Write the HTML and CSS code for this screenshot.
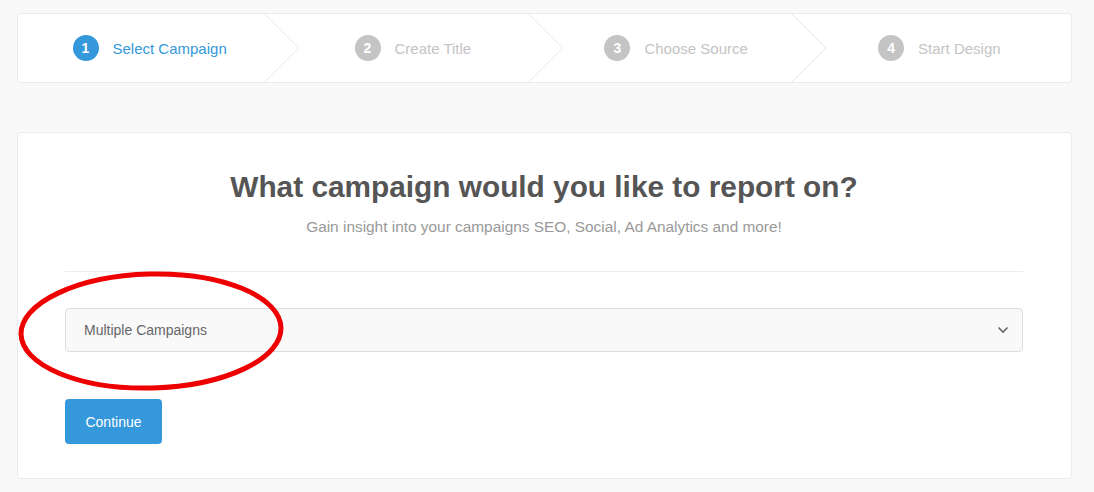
FILE: index.html
```html
<!DOCTYPE html>
<html>
<head>
<meta charset="utf-8">
<link rel="stylesheet" href="styles.css">
</head>
<body>
<div class="page">
  <div class="steps">
    <div class="step active">
      <span class="num">1</span><span class="label">Select Campaign</span>
      <svg class="chev" width="36" height="70" viewBox="0 0 36 70"><polyline points="0,0 35,35 0,70" fill="none" stroke="#e6e6e6" stroke-width="1"/></svg>
    </div>
    <div class="step">
      <span class="num">2</span><span class="label">Create Title</span>
      <svg class="chev" width="36" height="70" viewBox="0 0 36 70"><polyline points="0,0 35,35 0,70" fill="none" stroke="#e6e6e6" stroke-width="1"/></svg>
    </div>
    <div class="step">
      <span class="num">3</span><span class="label">Choose Source</span>
      <svg class="chev" width="36" height="70" viewBox="0 0 36 70"><polyline points="0,0 35,35 0,70" fill="none" stroke="#e6e6e6" stroke-width="1"/></svg>
    </div>
    <div class="step">
      <span class="num">4</span><span class="label">Start Design</span>
    </div>
  </div>

  <div class="card">
    <h1 class="title">What campaign would you like to report on?</h1>
    <p class="sub">Gain insight into your campaigns SEO, Social, Ad Analytics and more!</p>
    <div class="divider"></div>
    <div class="select-wrap">
      <div class="select">
        <span>Multiple Campaigns</span>
        <svg class="caret" width="12" height="8" viewBox="0 0 12 8"><polyline points="1.5,1.5 6,6 10.5,1.5" fill="none" stroke="#666" stroke-width="1.6"/></svg>
      </div>
      <svg class="ring" width="272" height="124" viewBox="0 0 272 124"><ellipse cx="134" cy="62" rx="130" ry="57" fill="none" stroke="#ee0000" stroke-width="5" transform="rotate(-1.5 134 62)"/></svg>
    </div>
    <button class="btn">Continue</button>
  </div>
</div>
</body>
</html>
```

FILE: styles.css
```css
* { box-sizing: border-box; }
html, body { margin: 0; padding: 0; }
body {
  background: #f9f9f9;
  font-family: "Liberation Sans", Arial, sans-serif;
  width: 1094px;
  height: 492px;
  overflow: hidden;
}
.page {
  padding: 13px 22px 0 17px;
}
.steps {
  display: flex;
  height: 70px;
  background: #fff;
  border: 1px solid #ebebeb;
  border-radius: 3px;
}
.step {
  flex: 1;
  position: relative;
  display: flex;
  align-items: center;
  justify-content: center;
  gap: 14px;
  color: #c4c4c4;
  font-size: 15px;
}
.step .num {
  width: 26px;
  height: 26px;
  border-radius: 50%;
  background: #c4c4c4;
  color: #fff;
  font-weight: bold;
  font-size: 14px;
  display: flex;
  align-items: center;
  justify-content: center;
}
.step.active { color: #3498db; }
.step.active .num { background: #3498db; }
.chev {
  position: absolute;
  right: -19px;
  top: -1px;
  z-index: 1;
}
.card {
  margin-top: 49px;
  height: 347px;
  background: #fff;
  border: 1px solid #ebebeb;
  border-radius: 4px;
  padding: 37px 48px 0 47px;
}
.title {
  margin: 0;
  text-align: center;
  font-size: 29.8px;
  font-weight: bold;
  color: #555;
  line-height: 34px;
}
.sub {
  margin: 13px 0 0;
  text-align: center;
  font-size: 15.4px;
  color: #999;
  line-height: 20px;
}
.divider {
  margin-top: 34px;
  height: 1px;
  background: #ececec;
}
.select-wrap {
  position: relative;
  margin-top: 36px;
}
.select {
  height: 44px;
  background: #f9f9f9;
  border: 1px solid #dcdcdc;
  border-radius: 4px;
  display: flex;
  align-items: center;
  justify-content: space-between;
  padding: 0 13px 0 18px;
  font-size: 14px;
  color: #666;
}
.ring {
  position: absolute;
  left: -48px;
  top: -39px;
  pointer-events: none;
}
.btn {
  margin-top: 47px;
  width: 97px;
  height: 45px;
  background: #3498db;
  color: #fff;
  border: 0;
  border-radius: 4px;
  font-family: "Liberation Sans", Arial, sans-serif;
  font-size: 14px;
}
```
